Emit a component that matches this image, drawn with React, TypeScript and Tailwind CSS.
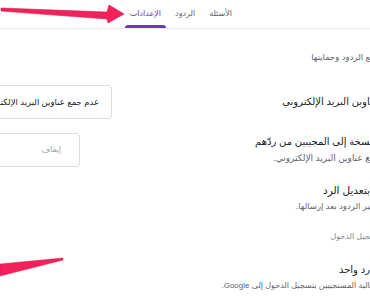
import React from "react";

const ZWJ = "\u200D";

export default function App() {
  return (
    <div
      dir="rtl"
      className="relative w-[370px] h-[300px] overflow-hidden bg-white font-['Liberation_Sans','DejaVu_Sans',sans-serif]"
    >
      {/* Tabs */}
      <div className="h-[29px] border-b border-[#e8eaed] flex items-end pr-[133px] gap-[4px]">
        <div className="h-[28px] flex items-center px-[5px] text-[8px] text-[#5f6368]">الأسئلة</div>
        <div className="h-[28px] flex items-center px-[5px] text-[8px] text-[#5f6368]">الردود</div>
        <div className="relative h-[28px] flex items-center px-[5px] text-[8px] text-[#673ab7]">
          الإعدادات
          <span className="absolute bottom-0 left-0 right-0 h-[3px] rounded-t-[3px] bg-[#673ab7]" />
        </div>
      </div>

      {/* Body */}
      <div className="pt-[22px]">
        <div className="whitespace-nowrap text-[8.5px] leading-[12px] text-[#5f6368]">
          {ZWJ}ع الردود وحمايتها
        </div>

        <div className="mt-[22px] h-[34px] flex items-center justify-between">
          <div className="whitespace-nowrap text-[10px] leading-[14px] text-[#202124]">
            {ZWJ}اوين البريد الإلكتروني
          </div>
          <div className="-ml-[20px] h-[34px] w-[132px] flex items-center overflow-hidden rounded-[4px] border border-[#dadce0] pr-[12px]">
            <span className="whitespace-nowrap text-[8.5px] text-[#202124]">عدم جمع عناوين البريد الإلكتروني</span>
          </div>
        </div>

        <div className="mt-[14px] h-[34px] flex items-center justify-between">
          <div className="flex flex-col">
            <div className="whitespace-nowrap text-[10px] leading-[16px] text-[#202124]">
              {ZWJ}سخة إلى المجيبين من ردّهم
            </div>
            <div className="whitespace-nowrap text-[9px] leading-[16px] text-[#5f6368]">
              {ZWJ}ع عناوين البريد الإلكتروني.
            </div>
          </div>
          <div className="-ml-[20px] h-[34px] w-[100px] flex items-center rounded-[4px] border border-[#dadce0] pr-[18px]">
            <span className="text-[8px] text-[#9aa0a6]">إيقاف</span>
          </div>
        </div>

        <div className="mt-[15px] flex flex-col">
          <div className="whitespace-nowrap text-[10.5px] leading-[16px] text-[#202124]">بتعديل الرد</div>
          <div className="whitespace-nowrap text-[8.5px] leading-[16px] text-[#5f6368]">
            {ZWJ}ير الردود بعد إرسالها.
          </div>
        </div>

        <div className="mt-[17px] whitespace-nowrap text-[8px] leading-[12px] text-[#80868b]">
          {ZWJ}جيل الدخول
        </div>

        <div className="mt-[19px] flex flex-col">
          <div className="whitespace-nowrap text-[10px] leading-[16px] text-[#202124]">رد واحد</div>
          <div className="whitespace-nowrap text-[8px] leading-[16px] text-[#5f6368]">
            {ZWJ}البة المستجيبين بتسجيل الدخول إلى Google.
          </div>
        </div>
      </div>

      {/* Annotation arrows */}
      <svg
        className="pointer-events-none absolute left-0 top-0"
        width="370"
        height="300"
        viewBox="0 0 370 300"
      >
        <polygon
          points="1,8 107,12 109,5 124,14 108,23 107,19 1,11"
          fill="#f2215a"
          stroke="#d81a4c"
          strokeWidth="0.6"
          strokeLinejoin="round"
        />
        <polygon
          points="0,264 63,258 63,260 0,276"
          fill="#f2215a"
          stroke="#d81a4c"
          strokeWidth="0.5"
          strokeLinejoin="round"
        />
      </svg>
    </div>
  );
}
